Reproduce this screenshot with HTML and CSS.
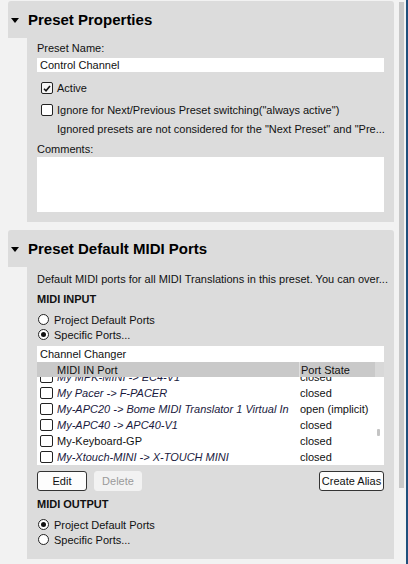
FILE: index.html
```html
<!DOCTYPE html>
<html lang="en">
<head>
    <meta charset="UTF-8">
    <title>Preset Properties</title>
    <link rel="stylesheet" href="styles.css">
</head>
<body>
<div class="window">
    <div class="sections">

        <!-- Preset Properties -->
        <div class="section">
            <div class="section-head">
                <span class="arrow"></span>
                <span class="section-title">Preset Properties</span>
            </div>
            <div class="section-body body-props">
                <div class="label">Preset Name:</div>
                <div class="field name-field">Control Channel</div>
                <div class="check-row first-check">
                    <span class="checkbox checked">
                        <svg width="8" height="7" viewBox="0 0 8 7"><path d="M1 3.8 L3 5.8 L7 1" fill="none" stroke="#111" stroke-width="1.6"/></svg>
                    </span>
                    <span>Active</span>
                </div>
                <div class="check-row">
                    <span class="checkbox"></span>
                    <span>Ignore for Next/Previous Preset switching("always active")</span>
                </div>
                <div class="hint">Ignored presets are not considered for the "Next Preset" and "Pre...</div>
                <div class="label comments-label">Comments:</div>
                <div class="field comments"></div>
            </div>
        </div>

        <!-- Preset Default MIDI Ports -->
        <div class="section">
            <div class="section-head">
                <span class="arrow"></span>
                <span class="section-title">Preset Default MIDI Ports</span>
            </div>
            <div class="section-body body-ports">
                <div class="desc">Default MIDI ports for all MIDI Translations in this preset. You can over...</div>
                <div class="group-title">MIDI INPUT</div>
                <div class="radios">
                    <div class="radio-row"><span class="radio"></span>Project Default Ports</div>
                    <div class="radio-row"><span class="radio on"></span>Specific Ports...</div>
                </div>
                <div class="field alias-field">Channel Changer</div>
                <div class="table-head">
                    <span class="col-port">MIDI IN Port</span>
                    <span class="col-state">Port State</span>
                    <span class="head-rest"></span>
                </div>
                <div class="port-list">
                    <div class="rows">
                        <div class="port-row"><span class="checkbox small"></span><span class="port-name alias">My MPK-MINI -&gt; EC4-V1</span><span class="port-state">closed</span></div>
                        <div class="port-row"><span class="checkbox small"></span><span class="port-name alias">My Pacer -&gt; F-PACER</span><span class="port-state">closed</span></div>
                        <div class="port-row"><span class="checkbox small"></span><span class="port-name alias">My-APC20 -&gt; Bome MIDI Translator 1 Virtual In</span><span class="port-state">open (implicit)</span></div>
                        <div class="port-row"><span class="checkbox small"></span><span class="port-name alias">My-APC40 -&gt; APC40-V1</span><span class="port-state">closed</span></div>
                        <div class="port-row"><span class="checkbox small"></span><span class="port-name">My-Keyboard-GP</span><span class="port-state">closed</span></div>
                        <div class="port-row"><span class="checkbox small"></span><span class="port-name alias">My-Xtouch-MINI -&gt; X-TOUCH MINI</span><span class="port-state">closed</span></div>
                    </div>
                    <span class="list-thumb"></span>
                </div>
                <div class="buttons">
                    <button class="btn">Edit</button>
                    <button class="btn disabled">Delete</button>
                    <button class="btn alias-btn">Create Alias</button>
                </div>
                <div class="group-title out-title">MIDI OUTPUT</div>
                <div class="radios">
                    <div class="radio-row"><span class="radio on"></span>Project Default Ports</div>
                    <div class="radio-row"><span class="radio"></span>Specific Ports...</div>
                </div>
            </div>
        </div>

    </div>

    <!-- Scrollbar -->
    <div class="scrollbar">
        <div class="scroll-thumb"></div>
    </div>
    <div class="edge"></div>
</div>
</body>
</html>
```

FILE: styles.css
```css
/* General */
body {
    margin: 0;
    background-color: #f2f2f2;
    font-family: "Liberation Sans", Arial, sans-serif;
    font-size: 11px;
    color: #111;
}

.window {
    display: flex;
    height: 564px;
    overflow: hidden;
}

.sections {
    width: 386px;
    padding: 1px 0 0 8px;
}

/* Sections */
.section + .section {
    margin-top: 8px;
}

.section-head {
    height: 37px;
    background-color: #dcdcdc;
    border-radius: 3px 3px 0 0;
    display: flex;
    align-items: center;
}

.arrow {
    width: 0;
    height: 0;
    margin: 2px 0 0 3px;
    border-left: 4px solid transparent;
    border-right: 4px solid transparent;
    border-top: 5px solid #000;
}

.section-title {
    margin-left: 9px;
    font-size: 15px;
    font-weight: bold;
    color: #000;
}

.section-body {
    margin-left: 19px;
    background-color: #dcdcdc;
    padding: 0 10px;
}

.body-props {
    padding-top: 3px;
    padding-bottom: 10px;
}

.body-ports {
    padding-top: 5px;
    padding-bottom: 12px;
}

.label, .hint, .desc, .group-title {
    line-height: 15px;
    white-space: nowrap;
}

.field {
    background-color: #fff;
    padding-left: 3px;
    line-height: 14px;
}

.name-field {
    margin-top: 2px;
    height: 14px;
}

/* Checkboxes */
.check-row {
    display: flex;
    align-items: center;
    height: 16px;
    margin-top: 6px;
    margin-left: 4px;
    gap: 4px;
    white-space: nowrap;
}

.first-check {
    margin-top: 8px;
}

.checkbox {
    width: 10px;
    height: 10px;
    border: 1px solid #222;
    border-radius: 2px;
    background-color: #fff;
    display: flex;
    align-items: center;
    justify-content: center;
    flex-shrink: 0;
}

.checkbox.checked {
    background-color: #f4f4f4;
}

.hint {
    margin-top: 4px;
    padding-left: 20px;
}

.comments-label {
    margin-top: 5px;
}

.comments {
    height: 55px;
}

/* MIDI ports */
.group-title {
    margin-top: 5px;
    font-weight: bold;
}

.radios {
    margin-top: 5px;
}

.radio-row {
    display: flex;
    align-items: center;
    height: 15px;
    gap: 5px;
    padding-left: 1px;
}

.radio {
    width: 9px;
    height: 9px;
    border: 1px solid #222;
    border-radius: 50%;
    background-color: #fff;
    position: relative;
}

.radio.on::after {
    content: "";
    position: absolute;
    left: 2px;
    top: 2px;
    width: 5px;
    height: 5px;
    border-radius: 50%;
    background-color: #111;
}

.alias-field {
    margin-top: 4px;
    height: 16px;
    line-height: 16px;
}

.table-head {
    display: flex;
    height: 15px;
    line-height: 16px;
}

.col-port {
    width: 242px;
    padding-left: 20px;
    background-color: #c9c9c9;
    border-right: 1px solid #e0e0e0;
}

.col-state {
    width: 74px;
    padding-left: 1px;
    background-color: #c9c9c9;
}

.head-rest {
    flex: 1;
    background-color: #d8d8d8;
}

.port-list {
    position: relative;
    height: 88px;
    overflow: hidden;
    background-color: #fff;
}

.rows {
    margin-top: -8px;
}

.port-row {
    display: flex;
    align-items: center;
    height: 16px;
    white-space: nowrap;
}

.checkbox.small {
    width: 11px;
    height: 10px;
    margin-left: 3px;
}

.port-name {
    width: 243px;
    margin-left: 4px;
    overflow: hidden;
}

.port-name.alias {
    font-style: italic;
    color: #1a1a40;
}

.port-state {
    margin-left: 0;
}

.list-thumb {
    position: absolute;
    right: 4px;
    top: 52px;
    width: 3px;
    height: 7px;
    background-color: #c4c4c4;
    border-radius: 1px;
}

/* Buttons */
.buttons {
    display: flex;
    gap: 7px;
    margin-top: 6px;
}

.btn {
    font-family: inherit;
    font-size: 11px;
    color: #111;
    height: 20px;
    width: 50px;
    padding: 0;
    border: 1px solid #333;
    border-radius: 3px;
    background-color: #fdfdfd;
}

.btn.disabled {
    border-color: #f2f2f2;
    background-color: #f2f2f2;
    color: #9a9a9a;
    width: 48px;
}

.alias-btn {
    margin-left: auto;
    width: 65px;
}

.out-title {
    margin-top: 6px;
}

/* Scrollbar */
.scrollbar {
    width: 7px;
    margin-left: 5px;
    padding-top: 2px;
}

.scroll-thumb {
    width: 5px;
    height: 486px;
    background-color: #c8c8c8;
}

.edge {
    width: 2px;
    margin-left: auto;
    background-color: #1f4f7c;
}
```
